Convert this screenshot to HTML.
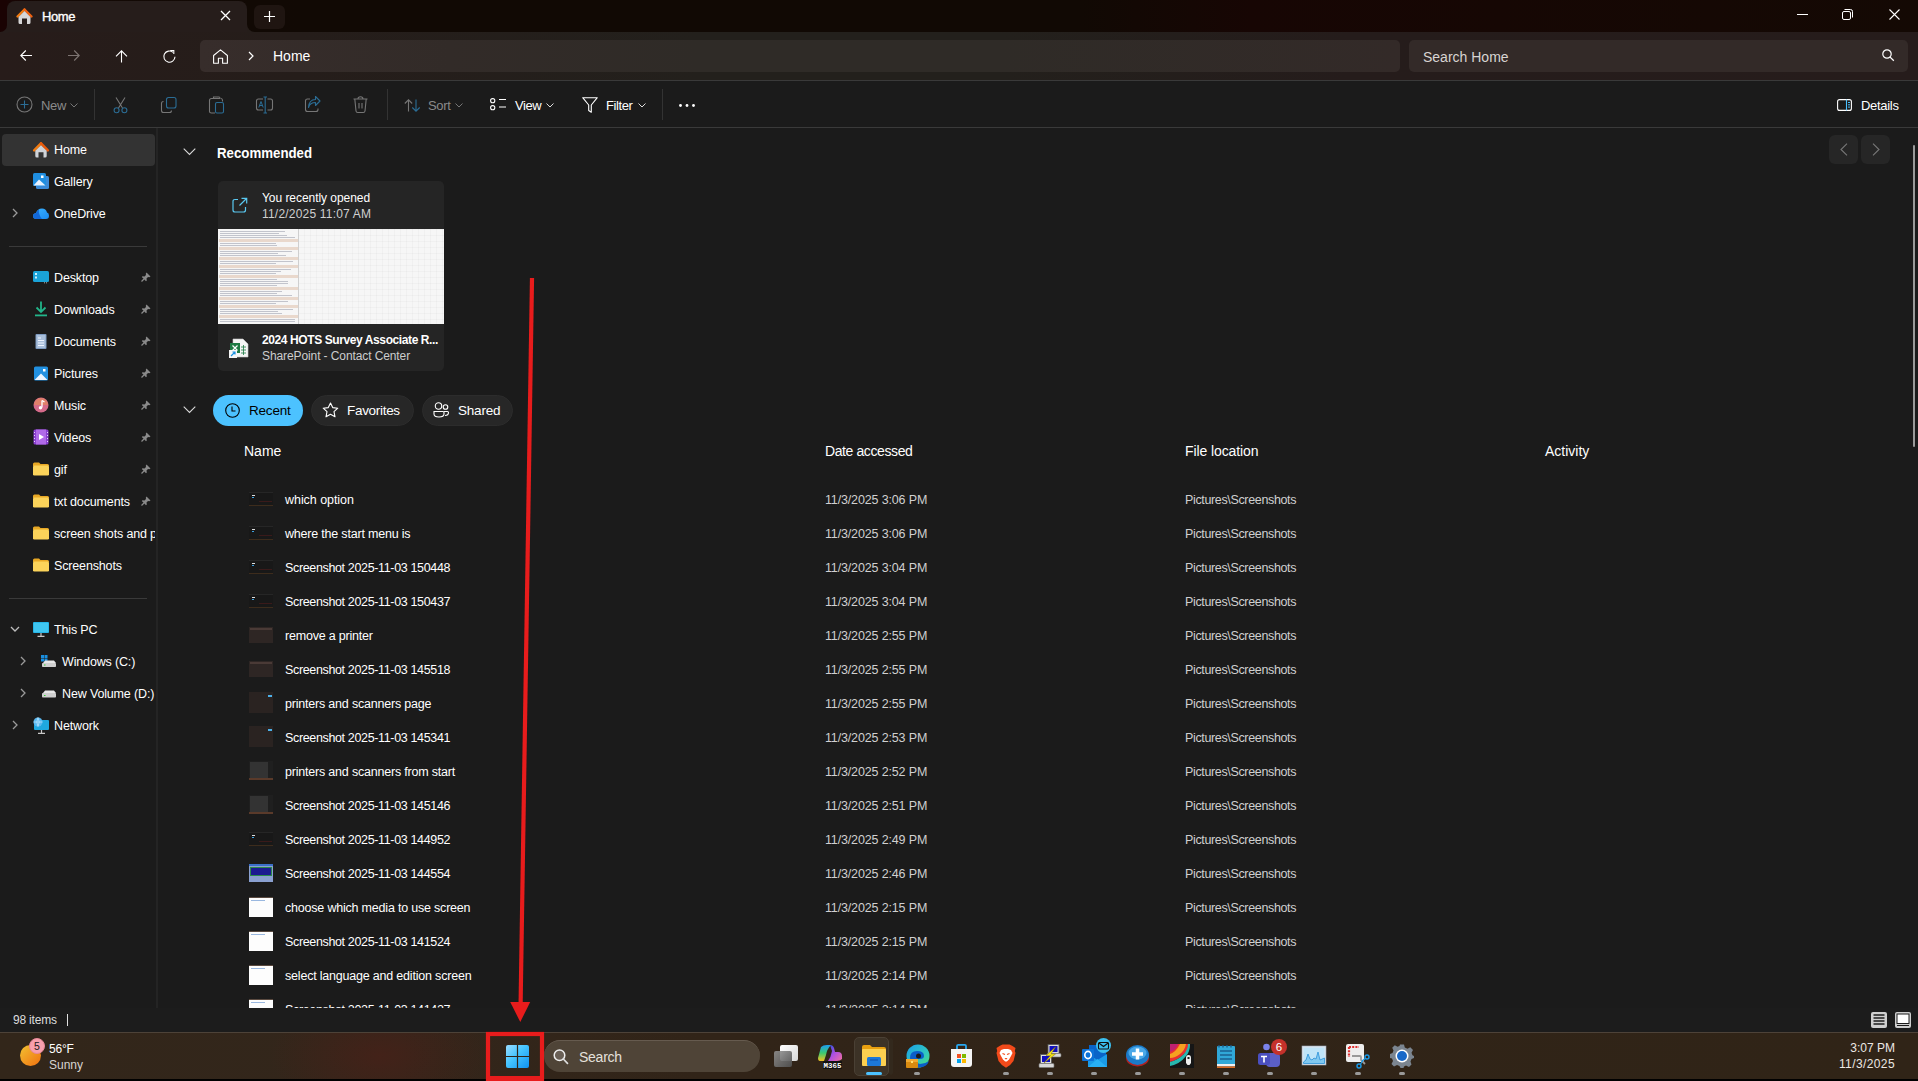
<!DOCTYPE html>
<html><head><meta charset="utf-8"><style>
*{box-sizing:border-box;margin:0;padding:0}
html,body{width:1918px;height:1081px;overflow:hidden;background:#1b1b1b;font-family:"Liberation Sans",sans-serif;color:#fff}
.a{position:absolute}
svg{position:absolute;overflow:visible}
.t{position:absolute;white-space:nowrap;line-height:1}
#title{left:0;top:0;width:1918px;height:33px;background:linear-gradient(90deg,#1a0303 0px,#140905 40px,#110904 300px,#110904 1080px,#170604 1250px,#160704 1500px,#140904 1918px)}
#tab{left:7px;top:1px;width:240px;height:32px;background:#261d1b;border-radius:8px 8px 0 0}
#addr{left:0;top:32px;width:1918px;height:48px;background:linear-gradient(90deg,#271c1a 0px,#251d1a 300px,#23201c 700px,#23201c 1000px,#251c1b 1350px,#261c1b 1918px)}
#toolbar{left:0;top:80px;width:1918px;height:48px;background:#1b1b1b;border-top:1px solid #3a3a3a;border-bottom:1px solid #3a3a3a}
#side{left:0;top:128px;width:157px;height:880px;background:#1b1b1b}
#split{left:156px;top:128px;width:2px;height:880px;background:#242424}
#status{left:0;top:1008px;width:1918px;height:24px;background:#1c1c1c}
#taskbar{left:0;top:1032px;width:1918px;height:47px;background:linear-gradient(90deg,#32261a,#33261b 400px,#312418 700px,#302417 1918px);border-top:1px solid #4d4238}
#bottom{left:0;top:1079px;width:1918px;height:2px;background:#000}
</style></head><body>
<div class="a" id="title"></div>
<div class="a" id="tab"></div>
<div class="a" id="addr"></div>
<div class="a" id="toolbar"></div>
<div class="a" id="side"></div>
<div class="a" id="split"></div>
<div class="a" id="status"></div>
<div class="a" id="taskbar"></div>
<div class="a" id="bottom"></div>
<div class="a" style="left:247px;top:16px;width:16px;height:17px;background:#251d1a"></div>
<div class="a" style="left:247px;top:0px;width:40px;height:32px;background:#110904;border-radius:0 0 0 8px"></div>
<div class="a" style="left:0px;top:16px;width:8px;height:17px;background:#261d1b"></div>
<div class="a" style="left:0px;top:0px;width:7px;height:32px;background:#1a0303;border-radius:0 0 7px 0"></div>
<svg style="left:16px;top:8px" width="17" height="17" viewBox="0 0 17 17"><path d="M8.5 1.5 L1.5 8.5" stroke="#f07a10" stroke-width="2.4" stroke-linecap="round"/><path d="M8.5 1.5 L15.5 8.5" stroke="#f06010" stroke-width="2.4" stroke-linecap="round"/><path d="M2.5 9 L8.5 3 L14.5 9 V14.5 Q14.5 16 13 16 H11 V10.5 H6 V16 H4 Q2.5 16 2.5 14.5Z" fill="#d6d6d6"/></svg>
<div class="t" style="left:42px;top:10px;font-size:13px;color:#fff;font-weight:normal;letter-spacing:-0.4px;-webkit-text-stroke:0.35px #fff">Home</div>
<svg style="left:220px;top:10px" width="11" height="11" viewBox="0 0 11 11"><path d="M1 1 L10 10 M10 1 L1 10" stroke="#fff" stroke-width="1.3"/></svg>
<div class="a" style="left:254px;top:5px;width:31px;height:24px;background:#1f1511;border-radius:6px;"></div>
<svg style="left:264px;top:11px" width="11" height="11" viewBox="0 0 11 11"><path d="M5.5 0 V11 M0 5.5 H11" stroke="#fff" stroke-width="1.2"/></svg>
<svg style="left:1797px;top:14px" width="11" height="2" viewBox="0 0 11 2"><path d="M0 0.5 H11" stroke="#fff" stroke-width="1"/></svg>
<svg style="left:1842px;top:9px" width="11" height="11" viewBox="0 0 11 11"><rect x="0.5" y="2.5" width="8" height="8" rx="1.5" fill="none" stroke="#fff" stroke-width="1"/><path d="M2.5 0.5 H8.5 Q10.5 0.5 10.5 2.5 V8.5" fill="none" stroke="#fff" stroke-width="1"/></svg>
<svg style="left:1889px;top:9px" width="11" height="11" viewBox="0 0 11 11"><path d="M0.5 0.5 L10.5 10.5 M10.5 0.5 L0.5 10.5" stroke="#fff" stroke-width="1.1"/></svg>
<svg style="left:20px;top:50px" width="12" height="11" viewBox="0 0 12 11"><path d="M0.8 5.5 H12 M5.8 0.5 L0.8 5.5 L5.8 10.5" fill="none" stroke="#fff" stroke-width="1.1"/></svg>
<svg style="left:68px;top:50px" width="12" height="11" viewBox="0 0 12 11"><path d="M0 5.5 H11.2 M6.2 0.5 L11.2 5.5 L6.2 10.5" fill="none" stroke="#7d7472" stroke-width="1.1"/></svg>
<svg style="left:115px;top:50px" width="13" height="13" viewBox="0 0 13 13"><path d="M6.5 0.8 V12.5 M1 6.3 L6.5 0.8 L12 6.3" fill="none" stroke="#fff" stroke-width="1.1"/></svg>
<svg style="left:163px;top:50px" width="13" height="13" viewBox="0 0 13 13"><path d="M12 6.8 A5.6 5.6 0 1 1 10 2.3" fill="none" stroke="#fff" stroke-width="1.1"/><path d="M7.2 0.5 H10.8 V4" fill="none" stroke="#fff" stroke-width="1.1"/></svg>
<div class="a" style="left:200px;top:40px;width:1200px;height:32px;background:linear-gradient(90deg,#372d2b 0px,#322b28 250px,#2f2b27 500px,#2f2b27 800px,#332a28 1200px);border-radius:5px;"></div>
<svg style="left:213px;top:49px" width="15" height="15" viewBox="0 0 15 15"><path d="M0.6 6.5 L7.5 0.8 L14.4 6.5 V14.3 H9.6 V9.3 H5.4 V14.3 H0.6Z" fill="none" stroke="#fff" stroke-width="1.1" stroke-linejoin="round"/></svg>
<svg style="left:248px;top:51px" width="6" height="10" viewBox="0 0 6 10"><path d="M1 1 L5 5 L1 9" fill="none" stroke="#fff" stroke-width="1.2"/></svg>
<div class="t" style="left:273px;top:49px;font-size:14px;color:#fff;font-weight:normal;letter-spacing:0px;">Home</div>
<div class="a" style="left:1409px;top:40px;width:499px;height:32px;background:#332a28;border-radius:5px;"></div>
<div class="t" style="left:1423px;top:50px;font-size:14px;color:#d8d4d2;font-weight:normal;letter-spacing:0px;">Search Home</div>
<svg style="left:1882px;top:49px" width="13" height="13" viewBox="0 0 13 13"><circle cx="5" cy="5" r="4.2" fill="none" stroke="#fff" stroke-width="1.2"/><path d="M8.1 8.1 L11.8 11.8" stroke="#fff" stroke-width="1.3"/></svg>
<svg style="left:16px;top:96px" width="17" height="17" viewBox="0 0 17 17"><circle cx="8.5" cy="8.5" r="7.5" fill="none" stroke="#767676" stroke-width="1.1"/><path d="M8.5 4.5 V12.5 M4.5 8.5 H12.5" stroke="#2b6d95" stroke-width="1.1"/></svg>
<div class="t" style="left:41px;top:99px;font-size:13px;color:#8a8a8a;font-weight:normal;letter-spacing:-0.3px;">New</div>
<svg style="left:70px;top:103px" width="8" height="5" viewBox="0 0 8 5"><path d="M0.5 0.5 L4 4 L7.5 0.5" fill="none" stroke="#767676" stroke-width="1"/></svg>
<div class="a" style="left:94px;top:89px;width:1px;height:31px;background:#333;border-radius:0px;"></div>
<svg style="left:113px;top:97px" width="15" height="17" viewBox="0 0 15 17"><path d="M3 0.5 L9.5 11 M12 0.5 L5.5 11" stroke="#767676" stroke-width="1.1"/><circle cx="3.6" cy="13.3" r="2.5" fill="none" stroke="#2b6d95" stroke-width="1.1"/><circle cx="11.4" cy="13.3" r="2.5" fill="none" stroke="#2b6d95" stroke-width="1.1"/></svg>
<svg style="left:161px;top:97px" width="16" height="16" viewBox="0 0 16 16"><path d="M2.5 4.5 Q0.5 4.5 0.5 6.5 V13.5 Q0.5 15.5 2.5 15.5 H8.5 Q10.5 15.5 10.5 13.5" fill="none" stroke="#767676" stroke-width="1.1"/><rect x="5.5" y="0.5" width="9.5" height="10.5" rx="2" fill="none" stroke="#2b6d95" stroke-width="1.1"/></svg>
<svg style="left:209px;top:96px" width="15" height="18" viewBox="0 0 15 18"><path d="M4 2.5 H2.5 Q0.5 2.5 0.5 4.5 V15.5 Q0.5 17 2.5 17 H6" fill="none" stroke="#767676" stroke-width="1.1"/><path d="M4.5 1 H10 Q11 1 11 2.5 H4.5Z" fill="none" stroke="#767676" stroke-width="1.1"/><path d="M12 2.5 Q13.5 2.5 13.5 4.5 V5.5" fill="none" stroke="#767676" stroke-width="1.1"/><rect x="6.5" y="6.5" width="8" height="10.5" rx="1.5" fill="none" stroke="#2b6d95" stroke-width="1.1"/></svg>
<svg style="left:256px;top:96px" width="18" height="18" viewBox="0 0 18 18"><path d="M7 3 H2.5 Q0.5 3 0.5 5 V12 Q0.5 14 2.5 14 H7 M11.5 3 H14.5 Q16.5 3 16.5 5 V12 Q16.5 14 14.5 14 H11.5" fill="none" stroke="#767676" stroke-width="1.1"/><path d="M9.2 1 V17 M7.5 1 H11 M7.5 17 H11" stroke="#2b6d95" stroke-width="1.1"/><path d="M2.8 11.5 L5 5.5 L7.2 11.5 M3.6 9.5 H6.4" fill="none" stroke="#2b6d95" stroke-width="1"/></svg>
<svg style="left:305px;top:97px" width="16" height="15" viewBox="0 0 16 15"><path d="M5 2 H2.5 Q0.5 2 0.5 4 V12.5 Q0.5 14.5 2.5 14.5 H11 Q13 14.5 13 12.5 V11.5" fill="none" stroke="#767676" stroke-width="1.1"/><path d="M3.5 10.5 Q5 5.5 10.5 5.5 V8.5 L15 4 L10.5 -0.5 V2.5 Q4 2.5 3.5 10.5Z" fill="none" stroke="#2b6d95" stroke-width="1.1" stroke-linejoin="round"/></svg>
<svg style="left:353px;top:96px" width="15" height="17" viewBox="0 0 15 17"><path d="M0.5 3 H14.5 M5 3 Q5 0.8 7.5 0.8 Q10 0.8 10 3" fill="none" stroke="#767676" stroke-width="1.1"/><path d="M1.8 3 L3 15 Q3.2 16.5 4.7 16.5 H10.3 Q11.8 16.5 12 15 L13.2 3" fill="none" stroke="#767676" stroke-width="1.1"/><path d="M6 7 V12.5 M9 7 V12.5" stroke="#767676" stroke-width="1.1"/></svg>
<div class="a" style="left:387px;top:89px;width:1px;height:31px;background:#333;border-radius:0px;"></div>
<svg style="left:404px;top:99px" width="17" height="13" viewBox="0 0 17 13"><path d="M4.5 12.5 V0.8 M0.8 4.5 L4.5 0.8 L8.2 4.5" fill="none" stroke="#767676" stroke-width="1.1"/><path d="M12 0.5 V12.2 M8.3 8.5 L12 12.2 L15.7 8.5" fill="none" stroke="#2b6d95" stroke-width="1.1"/></svg>
<div class="t" style="left:428px;top:99px;font-size:13px;color:#8a8a8a;font-weight:normal;letter-spacing:-0.3px;">Sort</div>
<svg style="left:455px;top:103px" width="8" height="5" viewBox="0 0 8 5"><path d="M0.5 0.5 L4 4 L7.5 0.5" fill="none" stroke="#767676" stroke-width="1"/></svg>
<svg style="left:490px;top:98px" width="17" height="13" viewBox="0 0 17 13"><rect x="0.6" y="0.6" width="4.2" height="4.2" rx="2" fill="none" stroke="#fff" stroke-width="1.1"/><rect x="0.6" y="7.6" width="4.2" height="4.2" rx="2" fill="none" stroke="#fff" stroke-width="1.1"/><path d="M9 1.5 H16 M9 9 H16" stroke="#fff" stroke-width="1.1"/></svg>
<div class="t" style="left:515px;top:99px;font-size:13px;color:#fff;font-weight:normal;letter-spacing:-0.4px;">View</div>
<svg style="left:546px;top:103px" width="8" height="5" viewBox="0 0 8 5"><path d="M0.5 0.5 L4 4 L7.5 0.5" fill="none" stroke="#ddd" stroke-width="1"/></svg>
<svg style="left:582px;top:97px" width="16" height="16" viewBox="0 0 16 16"><path d="M0.7 0.7 H15.3 L9.3 8 V15.3 L6.7 13.5 V8Z" fill="none" stroke="#fff" stroke-width="1.1" stroke-linejoin="round"/></svg>
<div class="t" style="left:606px;top:99px;font-size:13px;color:#fff;font-weight:normal;letter-spacing:-0.4px;">Filter</div>
<svg style="left:638px;top:103px" width="8" height="5" viewBox="0 0 8 5"><path d="M0.5 0.5 L4 4 L7.5 0.5" fill="none" stroke="#ddd" stroke-width="1"/></svg>
<div class="a" style="left:662px;top:89px;width:1px;height:31px;background:#333;border-radius:0px;"></div>
<svg style="left:679px;top:104px" width="16" height="3" viewBox="0 0 16 3"><circle cx="1.5" cy="1.5" r="1.4" fill="#fff"/><circle cx="8" cy="1.5" r="1.4" fill="#fff"/><circle cx="14.5" cy="1.5" r="1.4" fill="#fff"/></svg>
<svg style="left:1837px;top:99px" width="15" height="12" viewBox="0 0 15 12"><rect x="0.6" y="0.6" width="13.8" height="10.8" rx="2" fill="none" stroke="#fff" stroke-width="1.1"/><path d="M9.5 0.6 V11.4" stroke="#4cc2ff" stroke-width="1.1"/><path d="M11 3.5 H13 M11 5.8 H13 M11 8.1 H13" stroke="#4cc2ff" stroke-width="1"/></svg>
<div class="t" style="left:1861px;top:99px;font-size:13px;color:#fff;font-weight:normal;letter-spacing:-0.3px;">Details</div>
<div class="a" style="left:2px;top:134px;width:153px;height:32px;background:#333333;border-radius:4px;"></div>
<svg style="left:33px;top:142px" width="16" height="16" viewBox="0 0 16 16"><path d="M8 1.5 L1.2 8.3" stroke="#f07a10" stroke-width="2.6" stroke-linecap="round"/><path d="M8 1.5 L14.8 8.3" stroke="#e85a0c" stroke-width="2.6" stroke-linecap="round"/><path d="M2.3 8.7 L8 3.2 L13.7 8.7 V14 Q13.7 15.5 12.2 15.5 H10.5 V10.3 H5.5 V15.5 H3.8 Q2.3 15.5 2.3 14Z" fill="#cfd3d8"/></svg>
<div class="t" style="left:54px;top:144px;font-size:12.5px;color:#fff;font-weight:normal;letter-spacing:-0.15px;">Home</div>
<svg style="left:33px;top:173px" width="16" height="16" viewBox="0 0 16 16"><rect x="3" y="3" width="13" height="13" rx="1.5" fill="#3a8ad8"/><rect x="0" y="0" width="13" height="13" rx="1.5" fill="#1f8ee0"/><path d="M0.5 12.5 L6 6.5 L12.5 12.5Z" fill="#e8f2ff"/><rect x="8" y="2.5" width="2.5" height="2.5" fill="#fff"/></svg>
<div class="t" style="left:54px;top:176px;font-size:12.5px;color:#fff;font-weight:normal;letter-spacing:-0.15px;">Gallery</div>
<svg style="left:33px;top:208px" width="16" height="11" viewBox="0 0 16 11"><defs><linearGradient id="odg" x1="0" y1="0" x2="1" y2="1"><stop offset="0" stop-color="#3cb4ff"/><stop offset="1" stop-color="#1a8af0"/></linearGradient></defs><path d="M3.5 11 Q0 11 0 8 Q0 5.5 3 5 Q4.5 0.5 9 0.5 Q13 0.5 14 4.5 Q16 5 16 7.8 Q16 11 13 11Z" fill="url(#odg)"/><path d="M3.5 11 Q0 11 0 8 Q0 5.5 3 5 Q4 2.5 6 1.5 Q5 6 9 11Z" fill="#1268d8"/></svg>
<div class="t" style="left:54px;top:208px;font-size:12.5px;color:#fff;font-weight:normal;letter-spacing:-0.15px;">OneDrive</div>
<svg style="left:12px;top:208px" width="6" height="10" viewBox="0 0 6 10"><path d="M1 1 L5 5 L1 9" fill="none" stroke="#9a9a9a" stroke-width="1.3"/></svg>
<svg style="left:33px;top:271px" width="16" height="12" viewBox="0 0 16 12"><rect x="0" y="0" width="16" height="11" rx="1.5" fill="#1aa3d8"/><rect x="2" y="2" width="2" height="2" fill="#c8f0ff"/><rect x="2" y="5.5" width="2" height="2" fill="#c8f0ff"/><rect x="11" y="11.3" width="1" height="1" fill="#aaa"/><rect x="13" y="11.3" width="1" height="1" fill="#aaa"/></svg>
<div class="t" style="left:54px;top:272px;font-size:12.5px;color:#fff;font-weight:normal;letter-spacing:-0.15px;">Desktop</div>
<svg style="left:141px;top:272px" width="10" height="10" viewBox="0 0 10 10"><path d="M5.5 0.5 L9.5 4.5 L8.3 5.2 L7 5 L5.5 6.5 L5.8 8.5 L5 9.2 L0.8 5 L1.5 4.2 L3.5 4.5 L5 3 L4.8 1.7Z" fill="#8a8a8a"/><path d="M0.5 9.5 L3 7" stroke="#8a8a8a" stroke-width="1.2"/></svg>
<svg style="left:33px;top:301px" width="16" height="16" viewBox="0 0 16 16"><path d="M8 0.5 V11 M3.5 6.5 L8 11 L12.5 6.5" fill="none" stroke="#22b58a" stroke-width="1.8"/><rect x="2" y="13.5" width="12" height="1.8" fill="#22b58a"/></svg>
<div class="t" style="left:54px;top:304px;font-size:12.5px;color:#fff;font-weight:normal;letter-spacing:-0.15px;">Downloads</div>
<svg style="left:141px;top:304px" width="10" height="10" viewBox="0 0 10 10"><path d="M5.5 0.5 L9.5 4.5 L8.3 5.2 L7 5 L5.5 6.5 L5.8 8.5 L5 9.2 L0.8 5 L1.5 4.2 L3.5 4.5 L5 3 L4.8 1.7Z" fill="#8a8a8a"/><path d="M0.5 9.5 L3 7" stroke="#8a8a8a" stroke-width="1.2"/></svg>
<svg style="left:33px;top:334px" width="16" height="15" viewBox="0 0 16 15"><rect x="2.5" y="0" width="11" height="15" rx="1" fill="#7d9ac0"/><rect x="3.5" y="1" width="9" height="13" fill="#a9bfdb"/><path d="M5 4 H8 M5 6.5 H11 M5 9 H11 M5 11.5 H11" stroke="#eef4ff" stroke-width="1"/></svg>
<div class="t" style="left:54px;top:336px;font-size:12.5px;color:#fff;font-weight:normal;letter-spacing:-0.15px;">Documents</div>
<svg style="left:141px;top:336px" width="10" height="10" viewBox="0 0 10 10"><path d="M5.5 0.5 L9.5 4.5 L8.3 5.2 L7 5 L5.5 6.5 L5.8 8.5 L5 9.2 L0.8 5 L1.5 4.2 L3.5 4.5 L5 3 L4.8 1.7Z" fill="#8a8a8a"/><path d="M0.5 9.5 L3 7" stroke="#8a8a8a" stroke-width="1.2"/></svg>
<svg style="left:33px;top:366px" width="16" height="15" viewBox="0 0 16 15"><rect x="1" y="0.5" width="14" height="14" rx="1.5" fill="#2190e0"/><path d="M1.5 14 L8 7.5 L14.5 14Z" fill="#eaf4ff"/><rect x="10" y="3" width="2.5" height="2.5" fill="#fff"/></svg>
<div class="t" style="left:54px;top:368px;font-size:12.5px;color:#fff;font-weight:normal;letter-spacing:-0.15px;">Pictures</div>
<svg style="left:141px;top:368px" width="10" height="10" viewBox="0 0 10 10"><path d="M5.5 0.5 L9.5 4.5 L8.3 5.2 L7 5 L5.5 6.5 L5.8 8.5 L5 9.2 L0.8 5 L1.5 4.2 L3.5 4.5 L5 3 L4.8 1.7Z" fill="#8a8a8a"/><path d="M0.5 9.5 L3 7" stroke="#8a8a8a" stroke-width="1.2"/></svg>
<svg style="left:33px;top:397px" width="16" height="16" viewBox="0 0 16 16"><circle cx="8" cy="8" r="7.5" fill="#d56a8a"/><path d="M1 8 A7 7 0 0 1 15 8" fill="#e0806a"/><circle cx="8" cy="8" r="7.5" fill="none"/><path d="M9 3.5 V10.5" stroke="#fff" stroke-width="1.3"/><circle cx="7.5" cy="10.8" r="1.7" fill="#fff"/><path d="M9 3.5 L11.5 5" stroke="#fff" stroke-width="1.3"/></svg>
<div class="t" style="left:54px;top:400px;font-size:12.5px;color:#fff;font-weight:normal;letter-spacing:-0.15px;">Music</div>
<svg style="left:141px;top:400px" width="10" height="10" viewBox="0 0 10 10"><path d="M5.5 0.5 L9.5 4.5 L8.3 5.2 L7 5 L5.5 6.5 L5.8 8.5 L5 9.2 L0.8 5 L1.5 4.2 L3.5 4.5 L5 3 L4.8 1.7Z" fill="#8a8a8a"/><path d="M0.5 9.5 L3 7" stroke="#8a8a8a" stroke-width="1.2"/></svg>
<svg style="left:33px;top:429px" width="16" height="16" viewBox="0 0 16 16"><rect x="0.5" y="0.5" width="15" height="15" rx="1.5" fill="#8a3fd0"/><rect x="3" y="0.5" width="10" height="15" fill="#b06ae8"/><path d="M6 5 L11 8 L6 11Z" fill="#fff"/><path d="M1.5 3 V4 M1.5 6 V7 M1.5 9 V10 M1.5 12 V13 M14.5 3 V4 M14.5 6 V7 M14.5 9 V10 M14.5 12 V13" stroke="#e8d0ff" stroke-width="1"/></svg>
<div class="t" style="left:54px;top:432px;font-size:12.5px;color:#fff;font-weight:normal;letter-spacing:-0.15px;">Videos</div>
<svg style="left:141px;top:432px" width="10" height="10" viewBox="0 0 10 10"><path d="M5.5 0.5 L9.5 4.5 L8.3 5.2 L7 5 L5.5 6.5 L5.8 8.5 L5 9.2 L0.8 5 L1.5 4.2 L3.5 4.5 L5 3 L4.8 1.7Z" fill="#8a8a8a"/><path d="M0.5 9.5 L3 7" stroke="#8a8a8a" stroke-width="1.2"/></svg>
<svg style="left:33px;top:462px" width="16" height="14" viewBox="0 0 16 14"><path d="M0 2 Q0 0.5 1.5 0.5 H6 L7.5 2 H14.5 Q16 2 16 3.5 V4 H0Z" fill="#e8a825"/><rect x="0" y="3.5" width="16" height="10" rx="1.3" fill="#fbd35a"/></svg>
<div class="t" style="left:54px;top:464px;font-size:12.5px;color:#fff;font-weight:normal;letter-spacing:-0.15px;">gif</div>
<svg style="left:141px;top:464px" width="10" height="10" viewBox="0 0 10 10"><path d="M5.5 0.5 L9.5 4.5 L8.3 5.2 L7 5 L5.5 6.5 L5.8 8.5 L5 9.2 L0.8 5 L1.5 4.2 L3.5 4.5 L5 3 L4.8 1.7Z" fill="#8a8a8a"/><path d="M0.5 9.5 L3 7" stroke="#8a8a8a" stroke-width="1.2"/></svg>
<svg style="left:33px;top:494px" width="16" height="14" viewBox="0 0 16 14"><path d="M0 2 Q0 0.5 1.5 0.5 H6 L7.5 2 H14.5 Q16 2 16 3.5 V4 H0Z" fill="#e8a825"/><rect x="0" y="3.5" width="16" height="10" rx="1.3" fill="#fbd35a"/></svg>
<div class="t" style="left:54px;top:496px;font-size:12.5px;color:#fff;font-weight:normal;letter-spacing:-0.15px;">txt documents</div>
<svg style="left:141px;top:496px" width="10" height="10" viewBox="0 0 10 10"><path d="M5.5 0.5 L9.5 4.5 L8.3 5.2 L7 5 L5.5 6.5 L5.8 8.5 L5 9.2 L0.8 5 L1.5 4.2 L3.5 4.5 L5 3 L4.8 1.7Z" fill="#8a8a8a"/><path d="M0.5 9.5 L3 7" stroke="#8a8a8a" stroke-width="1.2"/></svg>
<svg style="left:33px;top:526px" width="16" height="14" viewBox="0 0 16 14"><path d="M0 2 Q0 0.5 1.5 0.5 H6 L7.5 2 H14.5 Q16 2 16 3.5 V4 H0Z" fill="#e8a825"/><rect x="0" y="3.5" width="16" height="10" rx="1.3" fill="#fbd35a"/></svg>
<div class="t" style="left:54px;top:528px;font-size:12.5px;letter-spacing:-0.15px;width:101px;overflow:hidden">screen shots and pi</div>
<svg style="left:33px;top:558px" width="16" height="14" viewBox="0 0 16 14"><path d="M0 2 Q0 0.5 1.5 0.5 H6 L7.5 2 H14.5 Q16 2 16 3.5 V4 H0Z" fill="#e8a825"/><rect x="0" y="3.5" width="16" height="10" rx="1.3" fill="#fbd35a"/></svg>
<div class="t" style="left:54px;top:560px;font-size:12.5px;color:#fff;font-weight:normal;letter-spacing:-0.15px;">Screenshots</div>
<svg style="left:33px;top:622px" width="16" height="15" viewBox="0 0 16 15"><rect x="0" y="0" width="16" height="11" rx="1" fill="#26b6e8"/><rect x="1" y="1" width="14" height="9" fill="#3fc6f0"/><path d="M8 11 V14 M4.5 14.3 H11.5" stroke="#c8c8c8" stroke-width="1.2"/></svg>
<div class="t" style="left:54px;top:624px;font-size:12.5px;color:#fff;font-weight:normal;letter-spacing:-0.15px;">This PC</div>
<svg style="left:10px;top:626px" width="10" height="6" viewBox="0 0 10 6"><path d="M1 1 L5 5 L9 1" fill="none" stroke="#bdbdbd" stroke-width="1.3"/></svg>
<svg style="left:41px;top:655px" width="16" height="12" viewBox="0 0 16 12"><rect x="0" y="0" width="3" height="3" fill="#1a8fe0"/><rect x="3.5" y="0" width="3" height="3" fill="#1a8fe0"/><rect x="0" y="3.5" width="3" height="3" fill="#1a8fe0"/><rect x="3.5" y="3.5" width="3" height="3" fill="#1a8fe0"/><path d="M2 8 L4 5.5 H13 L15 8Z" fill="#e8e8e8"/><rect x="1" y="8" width="14" height="4" rx="0.8" fill="#d0d0d0"/><rect x="3" y="9.5" width="1.5" height="1" fill="#3c3"/></svg>
<div class="t" style="left:62px;top:656px;font-size:12.5px;color:#fff;font-weight:normal;letter-spacing:-0.15px;">Windows (C:)</div>
<svg style="left:20px;top:656px" width="6" height="10" viewBox="0 0 6 10"><path d="M1 1 L5 5 L1 9" fill="none" stroke="#9a9a9a" stroke-width="1.3"/></svg>
<svg style="left:41px;top:688px" width="16" height="10" viewBox="0 0 16 10"><path d="M2 5 L4 2.5 H13 L15 5Z" fill="#e8e8e8"/><rect x="1" y="5" width="14" height="4.5" rx="0.8" fill="#d0d0d0"/><rect x="3" y="7" width="1.5" height="1" fill="#3c3"/></svg>
<div class="t" style="left:62px;top:688px;font-size:12.5px;color:#fff;font-weight:normal;letter-spacing:-0.15px;">New Volume (D:)</div>
<svg style="left:20px;top:688px" width="6" height="10" viewBox="0 0 6 10"><path d="M1 1 L5 5 L1 9" fill="none" stroke="#9a9a9a" stroke-width="1.3"/></svg>
<svg style="left:33px;top:717px" width="16" height="17" viewBox="0 0 16 17"><rect x="1" y="3" width="15" height="10" rx="1" fill="#1fa8e0"/><path d="M8.5 13 V16 M5 16.3 H12" stroke="#c8c8c8" stroke-width="1.2"/><circle cx="5" cy="5" r="4.5" fill="#5ab8f0"/><path d="M0.5 5 H9.5 M5 0.5 Q2.5 5 5 9.5 M5 0.5 Q7.5 5 5 9.5" fill="none" stroke="#bfe6ff" stroke-width="0.7"/></svg>
<div class="t" style="left:54px;top:720px;font-size:12.5px;color:#fff;font-weight:normal;letter-spacing:-0.15px;">Network</div>
<svg style="left:12px;top:720px" width="6" height="10" viewBox="0 0 6 10"><path d="M1 1 L5 5 L1 9" fill="none" stroke="#9a9a9a" stroke-width="1.3"/></svg>
<div class="a" style="left:9px;top:246px;width:138px;height:1px;background:#3a3a3a;border-radius:0px;"></div>
<div class="a" style="left:9px;top:598px;width:138px;height:1px;background:#3a3a3a;border-radius:0px;"></div>
<svg style="left:183px;top:148px" width="13" height="8" viewBox="0 0 13 8"><path d="M0.7 0.7 L6.5 6.5 L12.3 0.7" fill="none" stroke="#d8d8d8" stroke-width="1.1"/></svg>
<div class="t" style="left:217px;top:146px;font-size:14.5px;color:#fff;font-weight:bold;letter-spacing:0px;transform:scaleX(0.915);transform-origin:0 0">Recommended</div>
<div class="a" style="left:1829px;top:135px;width:29px;height:29px;background:#262626;border-radius:6px;"></div>
<div class="a" style="left:1861px;top:135px;width:29px;height:29px;background:#262626;border-radius:6px;"></div>
<svg style="left:1840px;top:143px" width="8" height="13" viewBox="0 0 8 13"><path d="M7 0.7 L1 6.5 L7 12.3" fill="none" stroke="#777" stroke-width="1.1"/></svg>
<svg style="left:1872px;top:143px" width="8" height="13" viewBox="0 0 8 13"><path d="M1 0.7 L7 6.5 L1 12.3" fill="none" stroke="#777" stroke-width="1.1"/></svg>
<div class="a" style="left:1912.5px;top:145px;width:2px;height:302px;background:#9a9a9a;border-radius:1px;"></div>
<div class="a" style="left:218px;top:181px;width:226px;height:190px;background:#252525;border-radius:5px;"></div>
<svg style="left:232px;top:197px" width="16" height="16" viewBox="0 0 16 16"><path d="M6 2.5 H3 Q1 2.5 1 4.5 V13 Q1 15 3 15 H11.5 Q13.5 15 13.5 13 V10" fill="none" stroke="#5ac8f0" stroke-width="1.2"/><path d="M7.5 8.5 L14.5 1.5 M9.5 1.3 H14.7 V6.5" fill="none" stroke="#5ac8f0" stroke-width="1.2"/></svg>
<div class="t" style="left:262px;top:192px;font-size:12px;color:#fff;font-weight:normal;letter-spacing:-0.05px;">You recently opened</div>
<div class="t" style="left:262px;top:208px;font-size:12px;color:#d0d0d0;font-weight:normal;letter-spacing:0.2px;">11/2/2025 11:07 AM</div>
<div class="a" style="left:218px;top:229px;width:226px;height:95px;background:#f6f6f6;border-radius:0px;"></div>
<div class="a" style="left:298px;top:229px;width:146px;height:95px;background-image:linear-gradient(90deg,rgba(0,0,0,0.025) 1px,transparent 1px),linear-gradient(rgba(0,0,0,0.025) 1px,transparent 1px);background-size:6px 6px"></div>
<div class="a" style="left:298px;top:229px;width:1px;height:95px;background:#cfcfcf;border-radius:0px;"></div>
<div class="a" style="left:220px;top:231px;width:65px;height:1px;background:#c2c4cc;border-radius:0px;"></div>
<div class="a" style="left:220px;top:233px;width:59px;height:1px;background:#c2c4cc;border-radius:0px;"></div>
<div class="a" style="left:220px;top:235px;width:67px;height:1px;background:#c2c4cc;border-radius:0px;"></div>
<div class="a" style="left:220px;top:237px;width:75px;height:1px;background:#c2c4cc;border-radius:0px;"></div>
<div class="a" style="left:219px;top:239px;width:79px;height:3px;background:#e9d8cc;border-radius:0px;"></div>
<div class="a" style="left:220px;top:243px;width:56px;height:1px;background:#c2c4cc;border-radius:0px;"></div>
<div class="a" style="left:220px;top:245px;width:57px;height:1px;background:#c2c4cc;border-radius:0px;"></div>
<div class="a" style="left:219px;top:247px;width:79px;height:3px;background:#e9d8cc;border-radius:0px;"></div>
<div class="a" style="left:220px;top:251px;width:72px;height:1px;background:#c2c4cc;border-radius:0px;"></div>
<div class="a" style="left:220px;top:253px;width:58px;height:1px;background:#c2c4cc;border-radius:0px;"></div>
<div class="a" style="left:220px;top:255px;width:66px;height:1px;background:#c2c4cc;border-radius:0px;"></div>
<div class="a" style="left:219px;top:257px;width:79px;height:3px;background:#e9d8cc;border-radius:0px;"></div>
<div class="a" style="left:220px;top:261px;width:73px;height:1px;background:#c2c4cc;border-radius:0px;"></div>
<div class="a" style="left:220px;top:263px;width:56px;height:1px;background:#c2c4cc;border-radius:0px;"></div>
<div class="a" style="left:219px;top:265px;width:79px;height:3px;background:#e9d8cc;border-radius:0px;"></div>
<div class="a" style="left:220px;top:269px;width:71px;height:1px;background:#c2c4cc;border-radius:0px;"></div>
<div class="a" style="left:220px;top:271px;width:61px;height:1px;background:#c2c4cc;border-radius:0px;"></div>
<div class="a" style="left:220px;top:273px;width:56px;height:1px;background:#c2c4cc;border-radius:0px;"></div>
<div class="a" style="left:219px;top:275px;width:79px;height:3px;background:#e9d8cc;border-radius:0px;"></div>
<div class="a" style="left:220px;top:279px;width:57px;height:1px;background:#c2c4cc;border-radius:0px;"></div>
<div class="a" style="left:220px;top:281px;width:68px;height:1px;background:#c2c4cc;border-radius:0px;"></div>
<div class="a" style="left:220px;top:283px;width:68px;height:1px;background:#c2c4cc;border-radius:0px;"></div>
<div class="a" style="left:220px;top:285px;width:57px;height:1px;background:#c2c4cc;border-radius:0px;"></div>
<div class="a" style="left:219px;top:287px;width:79px;height:3px;background:#e9d8cc;border-radius:0px;"></div>
<div class="a" style="left:220px;top:291px;width:62px;height:1px;background:#c2c4cc;border-radius:0px;"></div>
<div class="a" style="left:220px;top:293px;width:57px;height:1px;background:#c2c4cc;border-radius:0px;"></div>
<div class="a" style="left:220px;top:295px;width:72px;height:1px;background:#c2c4cc;border-radius:0px;"></div>
<div class="a" style="left:219px;top:297px;width:79px;height:3px;background:#e9d8cc;border-radius:0px;"></div>
<div class="a" style="left:220px;top:301px;width:68px;height:1px;background:#c2c4cc;border-radius:0px;"></div>
<div class="a" style="left:220px;top:303px;width:56px;height:1px;background:#c2c4cc;border-radius:0px;"></div>
<div class="a" style="left:219px;top:305px;width:79px;height:3px;background:#e9d8cc;border-radius:0px;"></div>
<div class="a" style="left:220px;top:309px;width:73px;height:1px;background:#c2c4cc;border-radius:0px;"></div>
<div class="a" style="left:220px;top:311px;width:58px;height:1px;background:#c2c4cc;border-radius:0px;"></div>
<div class="a" style="left:220px;top:313px;width:62px;height:1px;background:#c2c4cc;border-radius:0px;"></div>
<div class="a" style="left:219px;top:315px;width:79px;height:3px;background:#e9d8cc;border-radius:0px;"></div>
<div class="a" style="left:220px;top:319px;width:75px;height:1px;background:#c2c4cc;border-radius:0px;"></div>
<div class="a" style="left:220px;top:321px;width:75px;height:1px;background:#c2c4cc;border-radius:0px;"></div>
<svg style="left:229px;top:338px" width="20" height="20" viewBox="0 0 20 20"><path d="M4 1 H14 L19 6 V19 H4Z" fill="#f5f5f5" stroke="#c8c8c8" stroke-width="0.6"/><rect x="1" y="5" width="10" height="10" fill="#1d7a43"/><path d="M3.5 7.5 L8.5 12.5 M8.5 7.5 L3.5 12.5" stroke="#fff" stroke-width="1.2"/><path d="M12 9 H17 M12 12 H17 M12 15 H17 M14.5 7 V17" stroke="#1d7a43" stroke-width="0.8"/><rect x="0" y="12" width="8" height="8" fill="#f5f5f5"/><path d="M2 18 L6 14 M3.5 14 H6 V16.5" fill="none" stroke="#1a8fe0" stroke-width="1.2"/></svg>
<div class="t" style="left:262px;top:334px;font-size:12px;color:#fff;font-weight:bold;letter-spacing:-0.4px;">2024 HOTS Survey Associate R...</div>
<div class="t" style="left:262px;top:350px;font-size:12px;color:#cdcdcd;font-weight:normal;letter-spacing:-0.1px;">SharePoint - Contact Center</div>
<svg style="left:183px;top:406px" width="13" height="8" viewBox="0 0 13 8"><path d="M0.7 0.7 L6.5 6.5 L12.3 0.7" fill="none" stroke="#d8d8d8" stroke-width="1.1"/></svg>
<div class="a" style="left:213px;top:395px;width:90px;height:31px;background:#4cc2ff;border-radius:16px;"></div>
<svg style="left:225px;top:403px" width="15" height="15" viewBox="0 0 15 15"><circle cx="7.5" cy="7.5" r="6.8" fill="none" stroke="#000" stroke-width="1.1"/><path d="M7 3.5 V8 H10.5" fill="none" stroke="#000" stroke-width="1.1"/></svg>
<div class="t" style="left:249px;top:404px;font-size:13.5px;color:#000;font-weight:normal;letter-spacing:-0.2px;">Recent</div>
<div class="a" style="left:311px;top:395px;width:103px;height:31px;background:#272727;border-radius:16px;border:1px solid #2c2c2c"></div>
<svg style="left:322px;top:402px" width="17" height="16" viewBox="0 0 17 16"><path d="M8.5 1 L10.7 5.6 L15.8 6.2 L12 9.7 L13 14.8 L8.5 12.3 L4 14.8 L5 9.7 L1.2 6.2 L6.3 5.6Z" fill="none" stroke="#fff" stroke-width="1.1" stroke-linejoin="round"/></svg>
<div class="t" style="left:347px;top:404px;font-size:13.5px;color:#fff;font-weight:normal;letter-spacing:-0.3px;">Favorites</div>
<div class="a" style="left:422px;top:395px;width:91px;height:31px;background:#272727;border-radius:16px;border:1px solid #2c2c2c"></div>
<svg style="left:433px;top:402px" width="17" height="16" viewBox="0 0 17 16"><circle cx="5.5" cy="4" r="3.2" fill="none" stroke="#fff" stroke-width="1.1"/><circle cx="12.5" cy="5" r="2.3" fill="none" stroke="#fff" stroke-width="1.1"/><path d="M1 9.5 H10 Q11 9.5 11 10.5 V12 Q11 15 6 15 Q1 15 1 12Z" fill="none" stroke="#fff" stroke-width="1.1"/><path d="M11 9.5 H14.5 Q15.5 9.5 15.5 10.5 Q15.5 13.5 12 13.5" fill="none" stroke="#fff" stroke-width="1.1"/></svg>
<div class="t" style="left:458px;top:404px;font-size:13.5px;color:#fff;font-weight:normal;letter-spacing:-0.2px;">Shared</div>
<div class="t" style="left:244px;top:444px;font-size:14px;color:#fff;font-weight:normal;letter-spacing:0px;">Name</div>
<div class="t" style="left:825px;top:444px;font-size:14px;color:#fff;font-weight:normal;letter-spacing:-0.4px;">Date accessed</div>
<div class="t" style="left:1185px;top:444px;font-size:14px;color:#fff;font-weight:normal;letter-spacing:-0.1px;">File location</div>
<div class="t" style="left:1545px;top:444px;font-size:14px;color:#fff;font-weight:normal;letter-spacing:0px;">Activity</div>
<div class="a" style="left:158px;top:480px;width:1750px;height:528px;overflow:hidden">
<div class="a" style="left:91px;top:12px;width:24px;height:14px;background:#181818;border-top:1px solid #262626;border-bottom:1px solid #3d2c1c"></div>
<div class="a" style="left:94px;top:15px;width:3px;height:1px;background:#ddd"></div>
<div class="a" style="left:94px;top:17px;width:2px;height:1px;background:#3aa0e0"></div>
<div class="a" style="left:101px;top:21px;width:13px;height:1px;background:#3a1a1a"></div>
<div class="t" style="left:127px;top:14px;font-size:12.5px;color:#fff;font-weight:normal;letter-spacing:-0.05px;">which option</div>
<div class="t" style="left:667px;top:14px;font-size:12.5px;color:#d0d0d0;font-weight:normal;letter-spacing:-0.15px;">11/3/2025 3:06 PM</div>
<div class="t" style="left:1027px;top:14px;font-size:12.5px;color:#d0d0d0;font-weight:normal;letter-spacing:-0.35px;">Pictures\Screenshots</div>
<div class="a" style="left:91px;top:46px;width:24px;height:14px;background:#181818;border-top:1px solid #262626;border-bottom:1px solid #3d2c1c"></div>
<div class="a" style="left:94px;top:49px;width:3px;height:1px;background:#ddd"></div>
<div class="a" style="left:94px;top:51px;width:2px;height:1px;background:#3aa0e0"></div>
<div class="a" style="left:101px;top:55px;width:13px;height:1px;background:#3a1a1a"></div>
<div class="t" style="left:127px;top:48px;font-size:12.5px;color:#fff;font-weight:normal;letter-spacing:-0.2px;">where the start menu is</div>
<div class="t" style="left:667px;top:48px;font-size:12.5px;color:#d0d0d0;font-weight:normal;letter-spacing:-0.15px;">11/3/2025 3:06 PM</div>
<div class="t" style="left:1027px;top:48px;font-size:12.5px;color:#d0d0d0;font-weight:normal;letter-spacing:-0.35px;">Pictures\Screenshots</div>
<div class="a" style="left:91px;top:80px;width:24px;height:14px;background:#181818;border-top:1px solid #262626;border-bottom:1px solid #3d2c1c"></div>
<div class="a" style="left:94px;top:83px;width:3px;height:1px;background:#ddd"></div>
<div class="a" style="left:94px;top:85px;width:2px;height:1px;background:#3aa0e0"></div>
<div class="a" style="left:101px;top:89px;width:13px;height:1px;background:#3a1a1a"></div>
<div class="t" style="left:127px;top:82px;font-size:12.5px;color:#fff;font-weight:normal;letter-spacing:-0.35px;">Screenshot 2025-11-03 150448</div>
<div class="t" style="left:667px;top:82px;font-size:12.5px;color:#d0d0d0;font-weight:normal;letter-spacing:-0.15px;">11/3/2025 3:04 PM</div>
<div class="t" style="left:1027px;top:82px;font-size:12.5px;color:#d0d0d0;font-weight:normal;letter-spacing:-0.35px;">Pictures\Screenshots</div>
<div class="a" style="left:91px;top:114px;width:24px;height:14px;background:#181818;border-top:1px solid #262626;border-bottom:1px solid #3d2c1c"></div>
<div class="a" style="left:94px;top:117px;width:3px;height:1px;background:#ddd"></div>
<div class="a" style="left:94px;top:119px;width:2px;height:1px;background:#3aa0e0"></div>
<div class="a" style="left:101px;top:123px;width:13px;height:1px;background:#3a1a1a"></div>
<div class="t" style="left:127px;top:116px;font-size:12.5px;color:#fff;font-weight:normal;letter-spacing:-0.35px;">Screenshot 2025-11-03 150437</div>
<div class="t" style="left:667px;top:116px;font-size:12.5px;color:#d0d0d0;font-weight:normal;letter-spacing:-0.15px;">11/3/2025 3:04 PM</div>
<div class="t" style="left:1027px;top:116px;font-size:12.5px;color:#d0d0d0;font-weight:normal;letter-spacing:-0.35px;">Pictures\Screenshots</div>
<div class="a" style="left:91px;top:147px;width:24px;height:16px;background:#2e2624"></div>
<div class="a" style="left:92px;top:148px;width:22px;height:2px;background:#4a3a36"></div>
<div class="t" style="left:127px;top:150px;font-size:12.5px;color:#fff;font-weight:normal;letter-spacing:-0.2px;">remove a printer</div>
<div class="t" style="left:667px;top:150px;font-size:12.5px;color:#d0d0d0;font-weight:normal;letter-spacing:-0.15px;">11/3/2025 2:55 PM</div>
<div class="t" style="left:1027px;top:150px;font-size:12.5px;color:#d0d0d0;font-weight:normal;letter-spacing:-0.35px;">Pictures\Screenshots</div>
<div class="a" style="left:91px;top:181px;width:24px;height:16px;background:#2e2624"></div>
<div class="a" style="left:92px;top:182px;width:22px;height:2px;background:#4a3a36"></div>
<div class="t" style="left:127px;top:184px;font-size:12.5px;color:#fff;font-weight:normal;letter-spacing:-0.35px;">Screenshot 2025-11-03 145518</div>
<div class="t" style="left:667px;top:184px;font-size:12.5px;color:#d0d0d0;font-weight:normal;letter-spacing:-0.15px;">11/3/2025 2:55 PM</div>
<div class="t" style="left:1027px;top:184px;font-size:12.5px;color:#d0d0d0;font-weight:normal;letter-spacing:-0.35px;">Pictures\Screenshots</div>
<div class="a" style="left:91px;top:212px;width:24px;height:21px;background:#2a2321"></div>
<div class="a" style="left:110px;top:215px;width:4px;height:2px;background:#4cb0e8"></div>
<div class="t" style="left:127px;top:218px;font-size:12.5px;color:#fff;font-weight:normal;letter-spacing:-0.2px;">printers and scanners page</div>
<div class="t" style="left:667px;top:218px;font-size:12.5px;color:#d0d0d0;font-weight:normal;letter-spacing:-0.15px;">11/3/2025 2:55 PM</div>
<div class="t" style="left:1027px;top:218px;font-size:12.5px;color:#d0d0d0;font-weight:normal;letter-spacing:-0.35px;">Pictures\Screenshots</div>
<div class="a" style="left:91px;top:246px;width:24px;height:21px;background:#2a2321"></div>
<div class="a" style="left:110px;top:249px;width:4px;height:2px;background:#4cb0e8"></div>
<div class="t" style="left:127px;top:252px;font-size:12.5px;color:#fff;font-weight:normal;letter-spacing:-0.35px;">Screenshot 2025-11-03 145341</div>
<div class="t" style="left:667px;top:252px;font-size:12.5px;color:#d0d0d0;font-weight:normal;letter-spacing:-0.15px;">11/3/2025 2:53 PM</div>
<div class="t" style="left:1027px;top:252px;font-size:12.5px;color:#d0d0d0;font-weight:normal;letter-spacing:-0.35px;">Pictures\Screenshots</div>
<div class="a" style="left:91px;top:281px;width:24px;height:19px;background:#1f1f1f"></div>
<div class="a" style="left:92px;top:282px;width:18px;height:17px;background:#333"></div>
<div class="a" style="left:91px;top:298px;width:24px;height:2px;background:#5a3a2a"></div>
<div class="t" style="left:127px;top:286px;font-size:12.5px;color:#fff;font-weight:normal;letter-spacing:-0.2px;">printers and scanners from start</div>
<div class="t" style="left:667px;top:286px;font-size:12.5px;color:#d0d0d0;font-weight:normal;letter-spacing:-0.15px;">11/3/2025 2:52 PM</div>
<div class="t" style="left:1027px;top:286px;font-size:12.5px;color:#d0d0d0;font-weight:normal;letter-spacing:-0.35px;">Pictures\Screenshots</div>
<div class="a" style="left:91px;top:315px;width:24px;height:19px;background:#1f1f1f"></div>
<div class="a" style="left:92px;top:316px;width:18px;height:17px;background:#333"></div>
<div class="a" style="left:91px;top:332px;width:24px;height:2px;background:#5a3a2a"></div>
<div class="t" style="left:127px;top:320px;font-size:12.5px;color:#fff;font-weight:normal;letter-spacing:-0.35px;">Screenshot 2025-11-03 145146</div>
<div class="t" style="left:667px;top:320px;font-size:12.5px;color:#d0d0d0;font-weight:normal;letter-spacing:-0.15px;">11/3/2025 2:51 PM</div>
<div class="t" style="left:1027px;top:320px;font-size:12.5px;color:#d0d0d0;font-weight:normal;letter-spacing:-0.35px;">Pictures\Screenshots</div>
<div class="a" style="left:91px;top:352px;width:24px;height:14px;background:#181818;border-top:1px solid #262626;border-bottom:1px solid #3d2c1c"></div>
<div class="a" style="left:94px;top:355px;width:3px;height:1px;background:#ddd"></div>
<div class="a" style="left:94px;top:357px;width:2px;height:1px;background:#3aa0e0"></div>
<div class="a" style="left:101px;top:361px;width:13px;height:1px;background:#3a1a1a"></div>
<div class="t" style="left:127px;top:354px;font-size:12.5px;color:#fff;font-weight:normal;letter-spacing:-0.35px;">Screenshot 2025-11-03 144952</div>
<div class="t" style="left:667px;top:354px;font-size:12.5px;color:#d0d0d0;font-weight:normal;letter-spacing:-0.15px;">11/3/2025 2:49 PM</div>
<div class="t" style="left:1027px;top:354px;font-size:12.5px;color:#d0d0d0;font-weight:normal;letter-spacing:-0.35px;">Pictures\Screenshots</div>
<div class="a" style="left:91px;top:384px;width:24px;height:18px;background:#8aa0d0"></div>
<div class="a" style="left:91px;top:384px;width:24px;height:2px;background:#3a70c8"></div>
<div class="a" style="left:92px;top:387px;width:22px;height:9px;background:#2a8a4a"></div>
<div class="a" style="left:93px;top:388px;width:20px;height:7px;background:#1a1a90"></div>
<div class="t" style="left:127px;top:388px;font-size:12.5px;color:#fff;font-weight:normal;letter-spacing:-0.35px;">Screenshot 2025-11-03 144554</div>
<div class="t" style="left:667px;top:388px;font-size:12.5px;color:#d0d0d0;font-weight:normal;letter-spacing:-0.15px;">11/3/2025 2:46 PM</div>
<div class="t" style="left:1027px;top:388px;font-size:12.5px;color:#d0d0d0;font-weight:normal;letter-spacing:-0.35px;">Pictures\Screenshots</div>
<div class="a" style="left:91px;top:417px;width:24px;height:20px;background:#fdfdfd;border-top:1px solid #5a4a40"></div>
<div class="a" style="left:93px;top:420px;width:14px;height:1px;background:#9ab8e0"></div>
<div class="t" style="left:127px;top:422px;font-size:12.5px;color:#fff;font-weight:normal;letter-spacing:-0.2px;">choose which media to use screen</div>
<div class="t" style="left:667px;top:422px;font-size:12.5px;color:#d0d0d0;font-weight:normal;letter-spacing:-0.15px;">11/3/2025 2:15 PM</div>
<div class="t" style="left:1027px;top:422px;font-size:12.5px;color:#d0d0d0;font-weight:normal;letter-spacing:-0.35px;">Pictures\Screenshots</div>
<div class="a" style="left:91px;top:451px;width:24px;height:20px;background:#fdfdfd;border-top:1px solid #5a4a40"></div>
<div class="a" style="left:93px;top:454px;width:14px;height:1px;background:#9ab8e0"></div>
<div class="t" style="left:127px;top:456px;font-size:12.5px;color:#fff;font-weight:normal;letter-spacing:-0.35px;">Screenshot 2025-11-03 141524</div>
<div class="t" style="left:667px;top:456px;font-size:12.5px;color:#d0d0d0;font-weight:normal;letter-spacing:-0.15px;">11/3/2025 2:15 PM</div>
<div class="t" style="left:1027px;top:456px;font-size:12.5px;color:#d0d0d0;font-weight:normal;letter-spacing:-0.35px;">Pictures\Screenshots</div>
<div class="a" style="left:91px;top:485px;width:24px;height:20px;background:#fdfdfd;border-top:1px solid #5a4a40"></div>
<div class="a" style="left:93px;top:488px;width:14px;height:1px;background:#9ab8e0"></div>
<div class="t" style="left:127px;top:490px;font-size:12.5px;color:#fff;font-weight:normal;letter-spacing:-0.2px;">select language and edition screen</div>
<div class="t" style="left:667px;top:490px;font-size:12.5px;color:#d0d0d0;font-weight:normal;letter-spacing:-0.15px;">11/3/2025 2:14 PM</div>
<div class="t" style="left:1027px;top:490px;font-size:12.5px;color:#d0d0d0;font-weight:normal;letter-spacing:-0.35px;">Pictures\Screenshots</div>
<div class="a" style="left:91px;top:519px;width:24px;height:20px;background:#fdfdfd;border-top:1px solid #5a4a40"></div>
<div class="a" style="left:93px;top:522px;width:14px;height:1px;background:#9ab8e0"></div>
<div class="t" style="left:127px;top:524px;font-size:12.5px;color:#fff;font-weight:normal;letter-spacing:-0.35px;">Screenshot 2025-11-03 141427</div>
<div class="t" style="left:667px;top:524px;font-size:12.5px;color:#d0d0d0;font-weight:normal;letter-spacing:-0.15px;">11/3/2025 2:14 PM</div>
<div class="t" style="left:1027px;top:524px;font-size:12.5px;color:#d0d0d0;font-weight:normal;letter-spacing:-0.35px;">Pictures\Screenshots</div>
</div>
<div class="t" style="left:13px;top:1014px;font-size:12px;color:#dcdcdc;font-weight:normal;letter-spacing:-0.2px;">98 items</div>
<div class="a" style="left:67px;top:1014px;width:1px;height:12px;background:#e0e0e0;border-radius:0px;"></div>
<svg style="left:1871px;top:1012px" width="16" height="16" viewBox="0 0 16 16"><rect x="0" y="0" width="16" height="16" rx="2" fill="#cfcfcf"/><path d="M2.5 3 H13.5 M2.5 6 H13.5 M2.5 9 H13.5 M2.5 12 H13.5" stroke="#1c1c1c" stroke-width="1.3"/></svg>
<svg style="left:1895px;top:1012px" width="16" height="16" viewBox="0 0 16 16"><rect x="0" y="0" width="16" height="16" rx="2" fill="#cfcfcf"/><rect x="2" y="2" width="12" height="9.5" fill="#fff" stroke="#1c1c1c" stroke-width="1"/><path d="M2 13.5 H14" stroke="#1c1c1c" stroke-width="1"/></svg>
<div class="a" style="left:260px;top:1033px;width:240px;height:46px;background:radial-gradient(ellipse 110px 60px at 120px 23px,rgba(100,25,20,0.32),rgba(100,25,20,0) 100%)"></div>
<div class="a" style="left:20px;top:1045px;width:21px;height:21px;border-radius:50%;background:linear-gradient(135deg,#f2c232,#f07010)"></div>
<div class="a" style="left:29px;top:1038px;width:16px;height:16px;border-radius:50%;background:#f7a0ad;border:1px solid #e88898"></div>
<div class="t" style="left:34px;top:1041px;font-size:10.5px;color:#1a1a1a;font-weight:normal;letter-spacing:0px;">5</div>
<div class="t" style="left:49px;top:1043px;font-size:12px;color:#fff;font-weight:normal;letter-spacing:-0.2px;">56&deg;F</div>
<div class="t" style="left:49px;top:1059px;font-size:12px;color:#d8d4d0;font-weight:normal;letter-spacing:0px;">Sunny</div>
<svg style="left:506px;top:1045px" width="23" height="23" viewBox="0 0 23 23"><defs><linearGradient id="wg" gradientUnits="userSpaceOnUse" x1="0" y1="0" x2="23" y2="23"><stop offset="0" stop-color="#9adcff"/><stop offset="0.45" stop-color="#45c4ff"/><stop offset="1" stop-color="#0f92f2"/></linearGradient></defs><rect x="0" y="0" width="23" height="23" rx="2" fill="url(#wg)"/><path d="M11.5 0 V23 M0 11.5 H23" stroke="#312418" stroke-width="1.2"/></svg>
<div class="a" style="left:544px;top:1040px;width:216px;height:32px;background:#4f4437;border-radius:16px;border-top:1px solid #665b4f"></div>
<svg style="left:553px;top:1049px" width="16" height="16" viewBox="0 0 16 16"><circle cx="6.5" cy="6.2" r="5.3" fill="#6a6056" stroke="#eee" stroke-width="1.5"/><path d="M10.3 10 L14.5 14.3" stroke="#ddd" stroke-width="1.7" stroke-linecap="round"/></svg>
<div class="t" style="left:579px;top:1050px;font-size:14px;color:#e4e0dc;font-weight:normal;letter-spacing:-0.25px;">Search</div>
<div class="a" style="left:780px;top:1045px;width:18px;height:16px;border-radius:2px;background:linear-gradient(135deg,#fff,#d8d8d8)"></div>
<div class="a" style="left:774px;top:1051px;width:18px;height:16px;border-radius:2px;background:linear-gradient(135deg,rgba(150,150,150,0.85),rgba(80,80,80,0.95))"></div>
<svg style="left:818px;top:1045px" width="25" height="24" viewBox="0 0 25 24"><defs><linearGradient id="cp1" x1="0" y1="0" x2="0" y2="1"><stop offset="0" stop-color="#1c9cf0"/><stop offset="0.5" stop-color="#3cc870"/><stop offset="1" stop-color="#f5c020"/></linearGradient><linearGradient id="cp2" x1="0" y1="0" x2="1" y2="1"><stop offset="0" stop-color="#2050e0"/><stop offset="0.5" stop-color="#b050e0"/><stop offset="1" stop-color="#f070a0"/></linearGradient></defs><path d="M3 2 Q5 0 9 0 H13 Q9 4 8 10 L6 16 H2 Q0 16 0 13 Z" fill="url(#cp1)"/><path d="M12 0 Q15 0 16 3 L17 7 H20 Q24 7 24 11 V14 Q22 16 19 16 H10 Q13 12 14 6Z" fill="url(#cp2)"/><rect x="5" y="16" width="19" height="8" rx="1" fill="#111"/><text x="14.5" y="22.8" font-family="Liberation Mono" font-size="7.5" font-weight="bold" fill="#fff" text-anchor="middle">M365</text></svg>
<div class="a" style="left:854px;top:1037px;width:35px;height:39px;background:#3c3226;border-radius:5px;border:1px solid #4a4034"></div>
<div class="a" style="left:889px;top:1038px;width:4px;height:37px;background:#33291d;border-radius:3px;"></div>
<svg style="left:862px;top:1045px" width="24" height="21" viewBox="0 0 24 21"><path d="M0 2 Q0 0 2 0 H8 L10 2 H22 Q24 2 24 4 V5 H0Z" fill="#e8a010"/><rect x="0" y="4" width="24" height="17" rx="1" fill="#fcd050"/><rect x="5" y="12" width="14" height="9" rx="1.5" fill="#1c78d8"/><rect x="8" y="14.5" width="8" height="1" fill="#0c4ea8"/></svg>
<div class="a" style="left:866px;top:1072px;width:16px;height:3px;background:#4cc2ff;border-radius:1.5px;"></div>
<svg style="left:906px;top:1044px" width="24" height="24" viewBox="0 0 24 24"><defs><linearGradient id="eg" x1="0" y1="0" x2="1" y2="1"><stop offset="0" stop-color="#1a9de8"/><stop offset="0.6" stop-color="#30c8c0"/><stop offset="1" stop-color="#50e070"/></linearGradient></defs><circle cx="12" cy="12" r="11.5" fill="url(#eg)"/><path d="M4 14 Q4 7 11 7 Q18 7 18 12 Q18 15 14 15 H9 Q9 19 14 20 Q19 20 23 17 Q21 23 13 23.5 Q4 23 4 14Z" fill="#0b5ec8"/><circle cx="12.5" cy="12" r="2.5" fill="#1a1a1a"/><rect x="0" y="15" width="12" height="9" rx="1" fill="#d88a10"/><rect x="0" y="15" width="12" height="3" fill="#f0a830"/><rect x="5" y="17" width="2" height="2" fill="#ffe070"/></svg>
<svg style="left:950px;top:1044px" width="23" height="24" viewBox="0 0 23 24"><path d="M7 5 V2 Q7 0.8 8.2 0.8 H14.8 Q16 0.8 16 2 V5" fill="none" stroke="#28a8f0" stroke-width="1.8"/><path d="M1 5 H22 V20 Q22 23 19 23 H4 Q1 23 1 20Z" fill="#f5f5f5"/><rect x="7" y="10" width="4" height="4" fill="#f25022"/><rect x="12" y="10" width="4" height="4" fill="#7fba00"/><rect x="7" y="15" width="4" height="4" fill="#00a4ef"/><rect x="12" y="15" width="4" height="4" fill="#ffb900"/></svg>
<svg style="left:996px;top:1044px" width="20" height="24" viewBox="0 0 20 24"><path d="M3.5 2 L6.5 0.5 H13.5 L16.5 2 L19.5 4 L18.8 7 L19.5 9 L17.5 17 Q15 21 10 23.8 Q5 21 2.5 17 L0.5 9 L1.2 7 L0.5 4Z" fill="#f24a1a"/><path d="M5 6 L8 5 H12 L15 6 L16.5 9 L15 12 L13 15.5 L10.8 17.5 H9.2 L7 15.5 L5 12 L3.5 9Z" fill="#fff"/><path d="M6.5 9.5 L9 10.5 M13.5 9.5 L11 10.5" stroke="#f24a1a" stroke-width="1.1"/><path d="M8.5 14 H11.5 L10 15.8Z" fill="#f24a1a"/></svg>
<svg style="left:1039px;top:1044px" width="23" height="24" viewBox="0 0 23 24"><rect x="9" y="0.5" width="11" height="9" fill="#ddd" stroke="#555" stroke-width="0.8"/><rect x="10.5" y="2" width="8" height="6" fill="#1010c0"/><rect x="8" y="9.5" width="14" height="3.5" rx="1" fill="#d8d8d8" stroke="#777" stroke-width="0.6"/><rect x="1.5" y="10.5" width="11" height="9" fill="#ddd" stroke="#555" stroke-width="0.8"/><rect x="3" y="12" width="8" height="6" fill="#1010c0"/><rect x="0" y="19.5" width="15" height="4" rx="1" fill="#d8d8d8" stroke="#777" stroke-width="0.6"/><path d="M16.5 3 L7 11.5 H11.5 L5 19 L16.5 10 H12 Z" fill="#f5e81a" stroke="#8a7000" stroke-width="0.5"/></svg>
<svg style="left:1082px;top:1038px" width="30" height="29" viewBox="0 0 30 29"><rect x="7" y="7" width="17" height="22" fill="#0a64c8"/><path d="M6 16 L15.5 22 L25 16 V29 H6Z" fill="#1a9be8"/><path d="M6 29 L15.5 21 L25 29Z" fill="#28b0f5"/><rect x="0" y="11" width="12" height="12" rx="1" fill="#0c72d8"/><ellipse cx="6" cy="17" rx="3.2" ry="3.6" fill="none" stroke="#fff" stroke-width="1.6"/><circle cx="21.5" cy="7.5" r="7.5" fill="#3cc0f0"/><rect x="16.5" y="4.5" width="10" height="6.5" rx="1" fill="none" stroke="#111" stroke-width="1.1"/><path d="M16.8 5 L21.5 8.5 L26.2 5" fill="none" stroke="#111" stroke-width="1.1"/></svg>
<svg style="left:1126px;top:1045px" width="23" height="22" viewBox="0 0 23 22"><ellipse cx="11.5" cy="13" rx="11.5" ry="8.5" fill="#b02020"/><ellipse cx="11.5" cy="10" rx="11.5" ry="10" fill="#1a7ac8"/><ellipse cx="11.5" cy="8" rx="9" ry="6.5" fill="#4aa8e8"/><path d="M11.5 3.5 V14.5 M6 9 H17" stroke="#fff" stroke-width="3.5"/></svg>
<svg style="left:1170px;top:1044px" width="24" height="24" viewBox="0 0 24 24"><rect x="0" y="0" width="24" height="24" fill="#161616"/><path d="M0 0 H20 Q19 6 14 10 Q8 16 0 18Z" fill="#e83030"/><path d="M0 0 H8 Q7 5 0 8Z" fill="#c02070"/><path d="M0 18 Q8 16 14 10 Q18 5 18 0 H20 Q20 8 16 12 Q10 20 0 22Z" fill="#28b8b0"/><path d="M10 0 H16 Q15 6 10 10 Q5 14 0 14 V10 Q6 8 10 0Z" fill="#f5a020"/><path d="M16 14 Q16 11 18.5 11 Q21 11 21 14 V19 L19.5 21 H17.5 L16 19Z" fill="#eee"/><rect x="17.5" y="13" width="2" height="2" fill="#222"/></svg>
<svg style="left:1217px;top:1044px" width="18" height="24" viewBox="0 0 18 24"><rect x="0" y="2" width="18" height="20" rx="1" fill="#30a8d8"/><rect x="0" y="20" width="18" height="2.5" fill="#f0f0f0"/><rect x="0" y="22.5" width="18" height="1.5" fill="#d86820"/><path d="M2 1 V3.5 M6 1 V3.5 M10 1 V3.5 M14 1 V3.5" stroke="#1a5a88" stroke-width="1.3"/><path d="M3 7 H15 M3 11 H15 M3 15 H15" stroke="#1a6090" stroke-width="1.4"/></svg>
<svg style="left:1258px;top:1039px" width="30" height="28" viewBox="0 0 30 28"><circle cx="8.5" cy="8" r="3.3" fill="#7b83eb"/><rect x="8" y="14" width="14" height="14" rx="4" fill="#5b5fc7"/><rect x="0" y="14" width="12" height="12" rx="2.5" fill="#4a4fc0"/><path d="M3 17.5 H9 M6 17.5 V23.5" stroke="#fff" stroke-width="1.6"/><circle cx="21" cy="8" r="8" fill="#c4312b"/><text x="21" y="12.2" font-family="Liberation Sans" font-size="11.5" fill="#fff" text-anchor="middle">6</text></svg>
<svg style="left:1302px;top:1046px" width="24" height="19" viewBox="0 0 24 19"><rect x="0" y="0" width="24" height="19" fill="#dfe6ee" stroke="#9aa8b8" stroke-width="0.6"/><rect x="1.5" y="1.5" width="21" height="16" fill="#bfe4f8"/><path d="M1.5 16 L4 14 L6 8 L8 13 L10 14 L12 12 L14 13 L16 6 L18 14 L22.5 12 V17.5 H1.5Z" fill="#80c8f0" stroke="#2a90d8" stroke-width="0.8"/></svg>
<svg style="left:1346px;top:1044px" width="24" height="24" viewBox="0 0 24 24"><rect x="0" y="0" width="18" height="18" rx="2" fill="#eee"/><path d="M3 3 H13 M3 3 V13" stroke="#e03030" stroke-width="2.2" stroke-dasharray="2 1.2"/><path d="M6 12 H14 Q15 12 15 13 V16 L19 20" fill="none" stroke="#999" stroke-width="1.8"/><circle cx="21" cy="13" r="2" fill="none" stroke="#1a9ae8" stroke-width="1.4"/><circle cx="13" cy="22" r="2" fill="none" stroke="#1a9ae8" stroke-width="1.4"/><path d="M19.5 14.3 L15.5 17.5 M14.3 20.5 L16.5 17" stroke="#1a9ae8" stroke-width="1.2"/></svg>
<svg style="left:1390px;top:1044px" width="24" height="24" viewBox="0 0 24 24"><path d="M10 0.5 H14 L14.8 3.5 L17.5 4.8 L20.3 3.3 L23 6 L21.5 8.8 L22.5 11.2 L24 12 V14 L21.5 15 L20.5 17.5 L21.5 20.5 L19 23 L16 21.5 L14 22.5 L13.5 24 H10.5 L9.5 22 L7 21 L4 22.5 L1.5 20 L3 17 L2 14.5 L0 14 V10 L2.5 9 L3.5 6.5 L2.2 3.8 L4.8 1.3 L7.5 2.8 L9.5 2Z" fill="#7b8590"/><circle cx="12" cy="12" r="6.5" fill="#fff"/><circle cx="12" cy="12" r="5" fill="#1868c8"/></svg>
<div class="a" style="left:1003px;top:1072px;width:6px;height:3px;background:#9a9a9a;border-radius:1.5px;"></div>
<div class="a" style="left:1047px;top:1072px;width:6px;height:3px;background:#9a9a9a;border-radius:1.5px;"></div>
<div class="a" style="left:1091px;top:1072px;width:6px;height:3px;background:#9a9a9a;border-radius:1.5px;"></div>
<div class="a" style="left:1135px;top:1072px;width:6px;height:3px;background:#9a9a9a;border-radius:1.5px;"></div>
<div class="a" style="left:1179px;top:1072px;width:6px;height:3px;background:#9a9a9a;border-radius:1.5px;"></div>
<div class="a" style="left:1223px;top:1072px;width:6px;height:3px;background:#9a9a9a;border-radius:1.5px;"></div>
<div class="a" style="left:1267px;top:1072px;width:6px;height:3px;background:#9a9a9a;border-radius:1.5px;"></div>
<div class="a" style="left:1311px;top:1072px;width:6px;height:3px;background:#9a9a9a;border-radius:1.5px;"></div>
<div class="a" style="left:1355px;top:1072px;width:6px;height:3px;background:#9a9a9a;border-radius:1.5px;"></div>
<div class="a" style="left:1399px;top:1072px;width:6px;height:3px;background:#9a9a9a;border-radius:1.5px;"></div>
<div class="a" style="left:914px;top:1072px;width:6px;height:3px;background:#9a9a9a;border-radius:1.5px;"></div>
<div class="t" style="right:23px;top:1042px;font-size:12px;color:#ece8e4;text-align:right">3:07 PM</div>
<div class="t" style="right:23px;top:1058px;font-size:12px;color:#ece8e4;text-align:right;letter-spacing:0.4px">11/3/2025</div>
<svg style="left:0;top:0" width="1918" height="1081"><path d="M532 278 L520.6 1004" stroke="#e81c1c" stroke-width="4.2" stroke-linecap="butt"/><path d="M510.2 1002 L530.2 1002 L520.3 1022Z" fill="#e81c1c"/><rect x="488" y="1034" width="54" height="45" fill="none" stroke="#e81c1c" stroke-width="4.2"/><rect x="486" y="1076" width="58" height="5" fill="#e81c1c"/></svg>
</body></html>
